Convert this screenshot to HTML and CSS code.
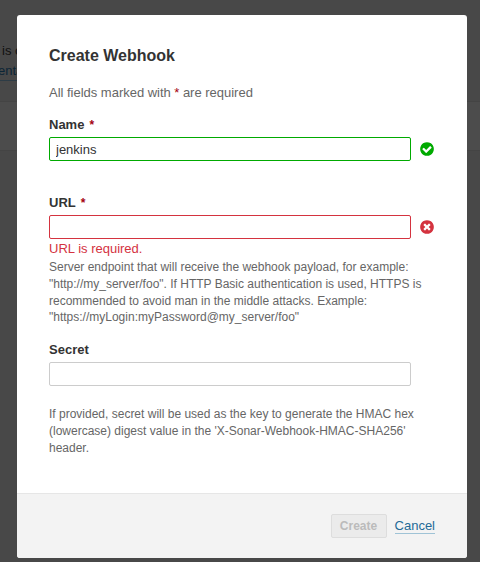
FILE: index.html
```html
<!DOCTYPE html>
<html lang="en">
<head>
<meta charset="utf-8">
<title>Create Webhook</title>
<link rel="stylesheet" href="styles.css">
</head>
<body>
<div class="page">
  <div class="page-intro">is o<br><a class="page-link">entation</a></div>
  <div class="page-panel"></div>
</div>
<div class="overlay">
  <form class="modal">
    <div class="modal-body">
      <h2 class="modal-title">Create Webhook</h2>
      <p class="note">All fields marked with <em class="mandatory">*</em> are required</p>
      <div class="field">
        <label class="label" for="name"><span>Name</span><em class="mandatory">*</em></label>
        <div class="control">
          <input class="input is-valid" id="name" type="text" value="jenkins">
          <svg class="icon" viewBox="0 0 16 16"><path fill="#00aa00" fill-rule="evenodd" d="M12.607 6.554q0-.25-.161-.411l-.813-.804q-.17-.17-.402-.17t-.402.17L7.187 8.973 5.169 6.955q-.17-.17-.402-.17t-.402.17l-.813.804q-.161.161-.161.411 0 .241.161.402l3.232 3.232q.17.17.402.17.241 0 .411-.17l4.848-4.848q.161-.161.161-.402zM14.857 8q0 1.866-.92 3.442t-2.496 2.496-3.442.92-3.442-.92-2.496-2.496T1.141 8t.92-3.442 2.496-2.496 3.442-.92 3.442.92 2.496 2.496.92 3.442z"/></svg>
        </div>
      </div>
      <div class="field field-url">
        <label class="label" for="url"><span>URL</span><em class="mandatory">*</em></label>
        <div class="control">
          <input class="input is-invalid" id="url" type="text">
          <svg class="icon" viewBox="0 0 16 16"><path fill="#d4333f" fill-rule="evenodd" d="M11.402 10.018q0-.232-.17-.402L9.616 8l1.616-1.616q.17-.17.17-.402 0-.241-.17-.411l-.804-.804q-.17-.17-.411-.17-.232 0-.402.17L8 6.384 6.384 4.768q-.17-.17-.402-.17-.241 0-.411.17l-.804.804q-.17.17-.17.411 0 .232.17.402L6.384 8 4.768 9.616q-.17.17-.17.402 0 .241.17.411l.804.804q.17.17.411.17.232 0 .402-.17L8 9.616l1.616 1.616q.17.17.402.17.241 0 .411-.17l.804-.804q.17-.17.17-.411zM14.857 8q0 1.866-.92 3.442t-2.496 2.496-3.442.92-3.442-.92-2.496-2.496T1.141 8t.92-3.442 2.496-2.496 3.442-.92 3.442.92 2.496 2.496.92 3.442z"/></svg>
        </div>
        <div class="error">URL is required.</div>
        <div class="help">Server endpoint that will receive the webhook payload, for example:<br>"http://my_server/foo". If HTTP Basic authentication is used, HTTPS is<br>recommended to avoid man in the middle attacks. Example:<br>"https://myLogin:myPassword@my_server/foo"</div>
      </div>
      <div class="field field-secret">
        <label class="label" for="secret"><span>Secret</span></label>
        <div class="control"><input class="input" id="secret" type="text"></div>
        <div class="help">If provided, secret will be used as the key to generate the HMAC hex<br>(lowercase) digest value in the 'X-Sonar-Webhook-HMAC-SHA256'<br>header.</div>
      </div>
    </div>
    <footer class="modal-foot">
      <button class="button" type="submit" disabled>Create</button>
      <a class="cancel">Cancel</a>
    </footer>
  </form>
</div>
</body>
</html>
```
FILE: styles.css
```css
* { box-sizing: border-box; }
body {
  margin: 0;
  height: 562px;
  overflow: hidden;
  background: #484848;
  color: #333;
  font: 13px/20px "Liberation Sans", Arial, sans-serif;
}
.page { height: 562px; padding-top: 41px; }
.page-intro {
  height: 60px;
  padding-left: 2px;
  color: #101010;
  white-space: nowrap;
}
.page-link {
  display: inline-block;
  margin-left: -4px;
  line-height: 18px;
  color: #0c2536;
  border-bottom: 1px solid #2d3c46;
}
.page-panel {
  height: 50px;
  background: #4c4c4c;
  border-top: 1px solid #444;
  border-bottom: 1px solid #444;
}
.overlay {
  position: absolute;
  inset: 0;
  padding: 15px 13px 0 17px;
}
.modal {
  display: flex;
  flex-direction: column;
  height: 543px;
  background: #fff;
  border-radius: 3px;
  overflow: hidden;
}
.modal-body { flex: 1; padding: 31px 32px 0; }
.modal-title {
  margin: 0 0 17px;
  font-size: 16px;
  line-height: 20px;
}
.note { margin: 0; color: #666; line-height: 20px; word-spacing: -0.1px; }
.mandatory { color: #a4030f; font-style: normal; }
.label .mandatory { font-size: 12px; }
.field { margin-top: 12px; }
.label {
  display: flex;
  gap: 5px;
  height: 22px;
  line-height: 20px;
  padding-bottom: 2px;
  font-weight: bold;
}
.control { display: flex; align-items: center; gap: 8px; height: 24px; }
.input {
  width: 362px;
  height: 24px;
  padding: 0 6px;
  border: 1px solid #ccc;
  border-radius: 2px;
  background: #fff;
  color: #333;
  font: inherit;
  outline: 0;
}
.is-valid { border-color: #00aa00; }
.is-invalid { border-color: #d4333f; }
.icon { width: 16px; height: 16px; flex: none; }
.field-url { margin-top: 32px; }
.error { height: 20px; color: #d4333f; }
.help {
  color: #666;
  font-size: 12px;
  line-height: 16.8px;
  white-space: nowrap;
}
.field-secret { margin-top: 14px; }
.field-secret .help { margin-top: 20px; }
.modal-foot {
  display: flex;
  justify-content: flex-end;
  align-items: center;
  gap: 8px;
  height: 65px;
  padding-right: 32px;
  background: #f3f3f3;
  border-top: 1px solid #e6e6e6;
}
.button {
  width: 56px;
  height: 24px;
  padding: 0;
  border: 1px solid #ddd;
  border-radius: 2px;
  background: #ebebeb;
  color: #bbb;
  font: bold 12px/22px "Liberation Sans", Arial, sans-serif;
}
.cancel {
  line-height: 15px;
  color: #236a97;
  border-bottom: 1px solid #9fc3d6;
}
```
